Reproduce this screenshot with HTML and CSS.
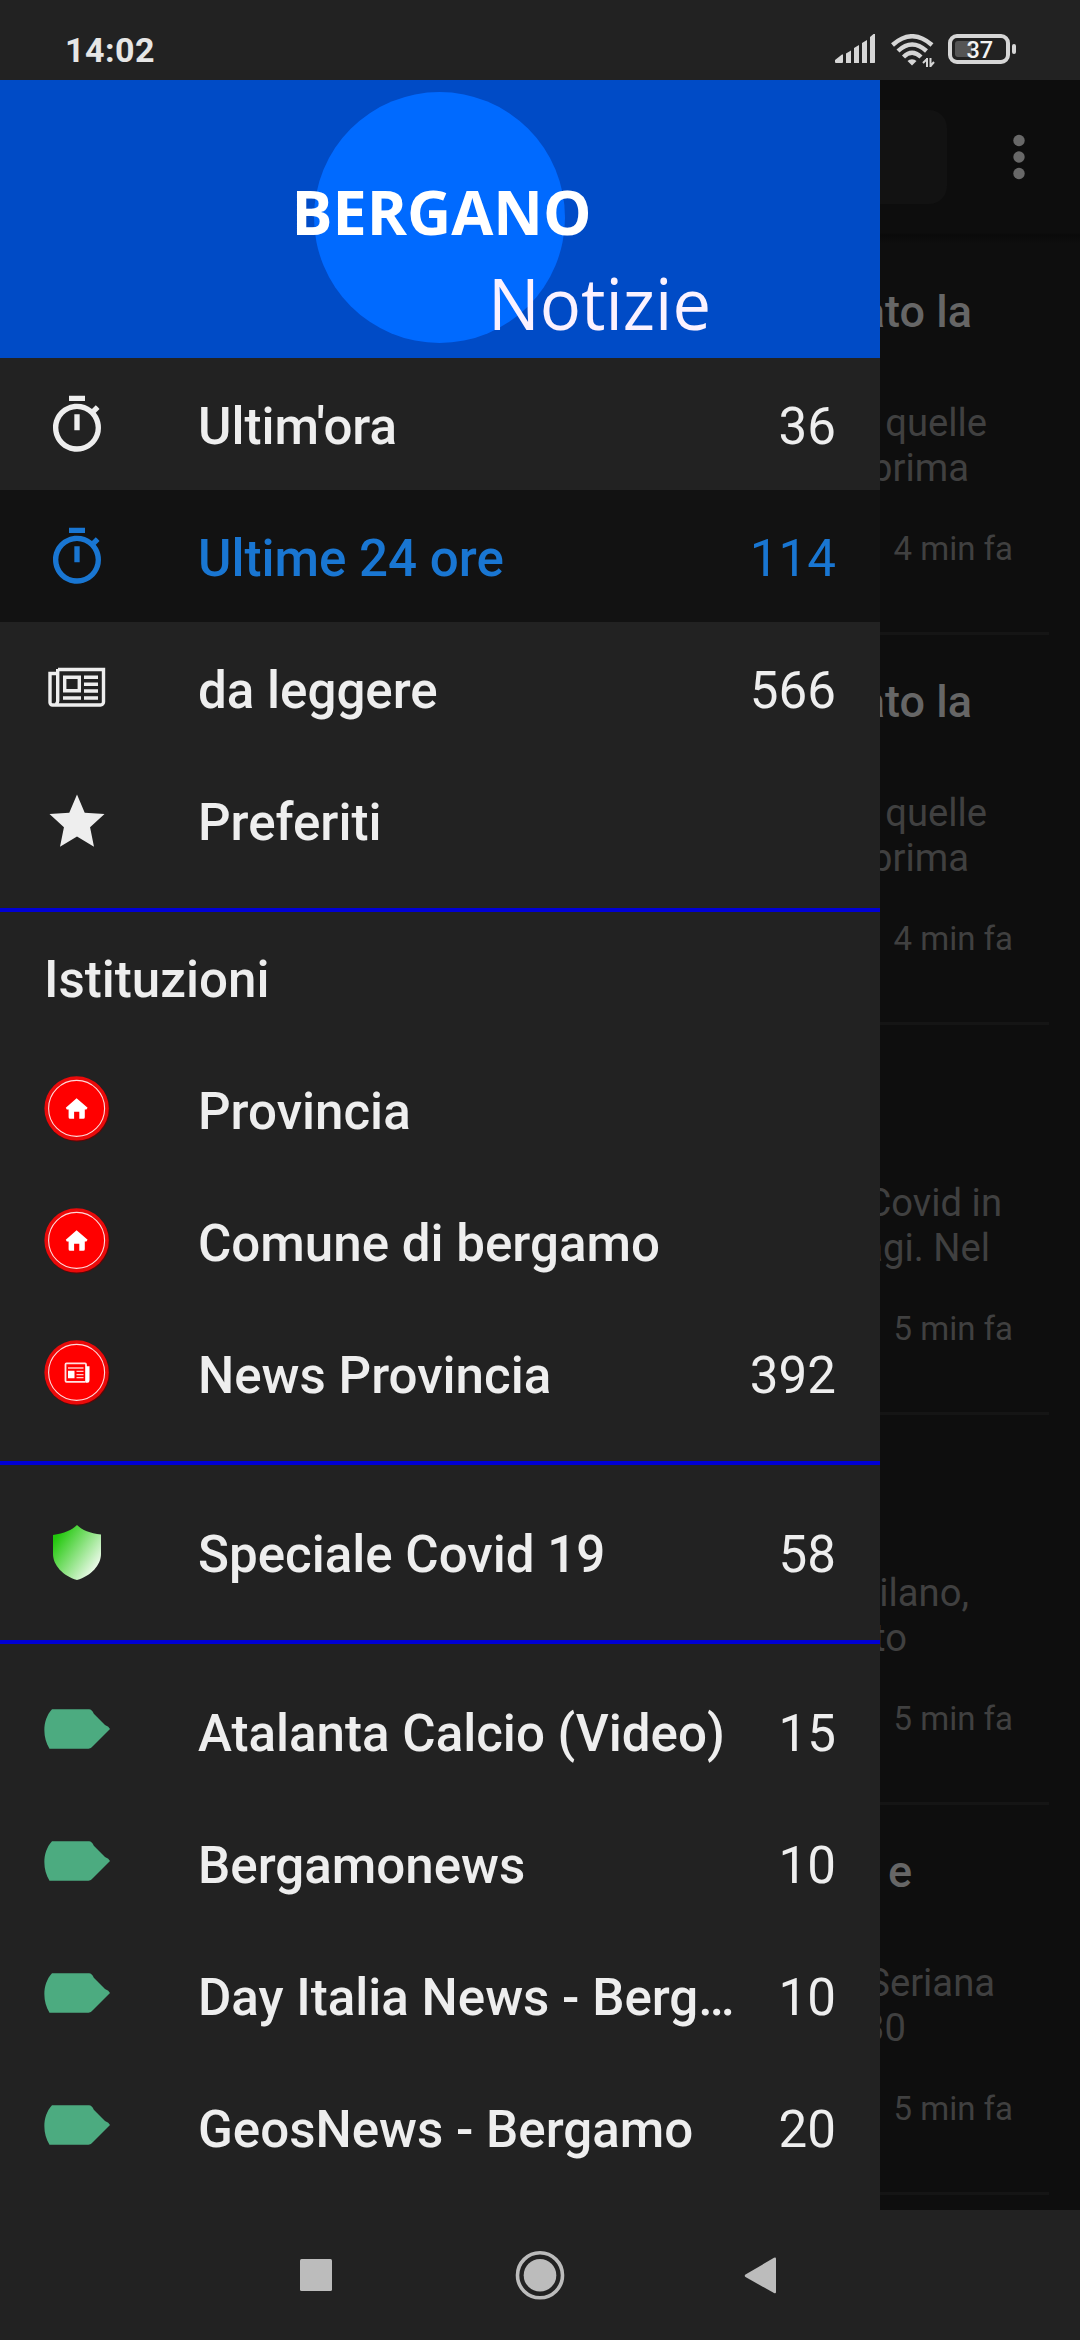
FILE: index.html
```html
<!DOCTYPE html>
<html lang="it">
<head>
<meta charset="utf-8">
<title>Bergamo Notizie</title>
<link rel="stylesheet" href="styles.css">
</head>
<body>
<svg width="0" height="0" class="defs">
  <defs>
    <linearGradient id="shieldFill" x1="0" y1="0.1" x2="1" y2="0.9">
      <stop offset="0.1" stop-color="#22c80c"/><stop offset="0.9" stop-color="#f0fbee"/>
    </linearGradient>
    <symbol id="timer" viewBox="0 0 24 24"><path d="M15 1H9v2h6V1zm-4 13h2V8h-2v6zm8.03-6.61l1.42-1.42c-.43-.51-.9-.99-1.41-1.41l-1.42 1.42A8.962 8.962 0 0 0 12 4c-4.97 0-9 4.03-9 9s4.02 9 9 9a8.994 8.994 0 0 0 7.03-14.61zM12 20c-3.87 0-7-3.13-7-7s3.13-7 7-7 7 3.13 7 7-3.13 7-7 7z"/></symbol>
    <symbol id="paper" viewBox="0 0 66 66">
      <g fill="none" stroke="currentColor" stroke-width="3.4">
        <path d="M14 14.500h45.500v32.500a3 3 0 0 1-3 3h-48a2.500 2.500 0 0 1-2.500-2.500V18.500h8"/>
        <path d="M13.700 14v32a4 4 0 0 1-2 3.500"/>
        <path d="M20.700 22.200h14.600v13.600h-14.600z"/>
        <path d="M40 22.200h14M40 29.200h14M40 36h14M40 43h14M19 43h18"/>
      </g>
    </symbol>
    <symbol id="star" viewBox="0 0 24 24"><path d="M12 17.270L18.180 21l-1.430-7.100L22 9.050l-7.190-.42L12 2 9.190 8.630 2 9.050l5.250 4.850L5.820 21z"/></symbol>
    <symbol id="disc" viewBox="0 0 66 66">
      <circle cx="33.300" cy="33.500" r="32.300" fill="#5a0808"/>
      <circle cx="32.600" cy="32.400" r="32.200" fill="#ea0a0a"/>
      <circle cx="32.600" cy="32.400" r="28" fill="#f00" stroke="#ffd9d9" stroke-width="1.100"/>
    </symbol>
    <symbol id="home" viewBox="0 0 66 66">
      <use href="#disc"/>
      <path fill="#fff" d="M32.600 22.200l11 9.500-1.200 1.800h-1.600v7.700q0 1.500-1.500 1.500h-4v-7h-5.200v7h-4q-1.500 0-1.500-1.500v-7.700h-1.800l-1-1.800z"/>
    </symbol>
    <symbol id="news" viewBox="0 0 66 66">
      <use href="#disc"/>
      <rect x="21.500" y="23.400" width="20.500" height="18.400" rx="1" fill="none" stroke="#ffe3e3" stroke-width="1.800"/>
      <path fill="#fff" d="M42 26.200h3.500v14q0 2.500-2 2.500h-1.500zM24 30.700h6.500v7.500H24z"/>
      <path stroke="#ffc9c9" stroke-width="1.300" d="M24 28h15.500M32.500 31.400h7M32.500 34.600h7M32.500 37.700h7"/>
    </symbol>
    <symbol id="shield" viewBox="0 0 66 66"><path fill="url(#shieldFill)" d="M33 6C38 11 46 14.500 57 15.500V35C57 46 47 57 33 61C19 57 9 46 9 35V16C20 14.500 28 11 33 6z"/></symbol>
    <symbol id="tag" viewBox="0 0 66 66"><path fill="#4cab80" d="M8 11.300H45Q48 11.500 49.800 15.800L61 27Q65 28.500 66 31L49 48Q47 50.700 44.500 50.700H5.500C-1.500 40-2 22 8 11.300z"/></symbol>
  </defs>
</svg>

<div class="screen">
  <header class="status">
    <span class="clock">14:02</span>
    <div class="indicators">
      <svg width="42" height="32" viewBox="0 0 42 32" fill="#d6d6d6"><path d="M0 30v-2l7-5.500h1V30q0 1-1 1H1q-1 0-1-1zM11 31V21.500l5-3V31zM19 31V16l5-3V31zM27 31V11l5-3V31zM35 31V5l3.500-3H40v28.500l-.5.500z"/></svg>
      <svg width="44" height="36" viewBox="0 0 44 36" fill="none" stroke="#d6d6d6" stroke-width="4.400"><path d="M1.500 11Q21 -6.500 41 11M7 17Q21 4 35.500 17M12.500 23Q21 14.500 30 23"/><path d="M16.500 27a5.500 4.300 0 0 1 9 0L21 31.500z" fill="#d6d6d6" stroke="none"/><path d="M36 24v9M39.500 24v9M36 25l-4 4M39.500 32l3.500-4" stroke-width="2"/></svg>
      <div class="battery"><span class="battery-case"><span class="battery-level">37</span></span><span class="battery-nub"></span></div>
    </div>
  </header>

  <div class="stage">
    <nav class="drawer">
      <div class="banner">
        <svg width="880" height="278" viewBox="0 80 880 278">
          <circle cx="439.500" cy="217.500" r="125.500" fill="#006aff"/>
          <text class="brand" x="291.500" y="235" textLength="300" lengthAdjust="spacingAndGlyphs">BERGANO</text>
          <text class="brand-sub" x="488" y="330" textLength="223" lengthAdjust="spacingAndGlyphs">Notizie</text>
        </svg>
      </div>
      <a class="row"><svg class="icon small"><use href="#timer"/></svg><span class="label">Ultim'ora</span><span class="count">36</span></a>
      <a class="row active"><svg class="icon small"><use href="#timer"/></svg><span class="label">Ultime 24 ore</span><span class="count">114</span></a>
      <a class="row"><svg class="icon"><use href="#paper"/></svg><span class="label">da leggere</span><span class="count">566</span></a>
      <a class="row"><svg class="icon star"><use href="#star"/></svg><span class="label">Preferiti</span></a>
      <hr class="rule tight">
      <h2 class="row section">Istituzioni</h2>
      <a class="row"><svg class="icon"><use href="#home"/></svg><span class="label">Provincia</span></a>
      <a class="row"><svg class="icon"><use href="#home"/></svg><span class="label">Comune di bergamo</span></a>
      <a class="row"><svg class="icon"><use href="#news"/></svg><span class="label">News Provincia</span><span class="count">392</span></a>
      <hr class="rule">
      <a class="row"><svg class="icon"><use href="#shield"/></svg><span class="label">Speciale Covid 19</span><span class="count">58</span></a>
      <hr class="rule">
      <a class="row"><svg class="icon"><use href="#tag"/></svg><span class="label">Atalanta Calcio (Video)</span><span class="count">15</span></a>
      <a class="row"><svg class="icon"><use href="#tag"/></svg><span class="label">Bergamonews</span><span class="count">10</span></a>
      <a class="row"><svg class="icon"><use href="#tag"/></svg><span class="label">Day Italia News - Berg…</span><span class="count">10</span></a>
      <a class="row"><svg class="icon"><use href="#tag"/></svg><span class="label">GeosNews - Bergamo</span><span class="count">20</span></a>
    </nav>

    <main class="feed">
      <div class="toolbar">
        <div class="search"></div>
        <svg class="more" width="12" height="46" viewBox="0 0 12 46" fill="#686868"><circle cx="6" cy="6.500" r="5.700"/><circle cx="6" cy="23" r="5.700"/><circle cx="6" cy="39.500" r="5.700"/></svg>
      </div>
      <article class="story one"><h3>ato la</h3><p>quelle</p><p class="second">prima</p><time>4 min fa</time></article>
      <article class="story one"><h3>ato la</h3><p>quelle</p><p class="second">prima</p><time>4 min fa</time></article>
      <article class="story two"><h3></h3><p>Covid in</p><p class="second">agi. Nel</p><time>5 min fa</time></article>
      <article class="story three"><h3></h3><p>ilano,</p><p class="second">to</p><time>5 min fa</time></article>
      <article class="story four"><h3>e</h3><p>Seriana</p><p class="second">30</p><time>5 min fa</time></article>
    </main>
  </div>

  <footer class="keys">
    <svg width="1080" height="130" viewBox="0 2210 1080 130" fill="#bcbcbc">
      <rect x="300" y="2259" width="32" height="32" rx="1.500"/>
      <circle cx="540" cy="2275.300" r="16.300"/><circle cx="540" cy="2275.300" r="22.500" fill="none" stroke="#bcbcbc" stroke-width="3.600"/>
      <path d="M745.500 2274.500L774 2257.800Q776 2257 776 2259V2292Q776 2294 774 2293L745.500 2277Q744 2275.700 745.500 2274.500z"/>
    </svg>
  </footer>
</div>
</body>
</html>
```
FILE: styles.css
```css
* { box-sizing: border-box; }
body { margin: 0; background: #222; font-family: Roboto, sans-serif; }
.defs { position: absolute; }
.screen { width: 1080px; height: 2340px; display: flex; flex-direction: column; background: #222; overflow: hidden; }

.status { height: 80px; flex: none; display: flex; justify-content: space-between; padding: 0 64px 0 65px; color: #e6e6e6; }
.clock { font-size: 34px; font-weight: 700; line-height: 40px; padding-top: 30px; letter-spacing: 0.5px; }
.indicators { display: flex; align-items: flex-start; padding-top: 32px; }
.indicators > svg:nth-child(2) { margin: 2px 13px 0 14px; }
.battery { display: flex; align-items: center; gap: 2px; padding-top: 2px; }
.battery-case { width: 62px; height: 30px; border: 4px solid #d6d6d6; border-radius: 9px; padding: 3px; }
.battery-level { display: block; width: 48px; height: 16px; border-radius: 3px; background: linear-gradient(90deg, #555 17px, transparent 17px); color: #f2f2f2; font-size: 23.5px; font-weight: 500; line-height: 18px; padding-left: 11.5px; }
.battery-nub { width: 4px; height: 10px; border-radius: 2px; background: #d6d6d6; }

.stage { height: 2130px; flex: none; display: flex; }
.drawer { width: 880px; flex: none; background: #222; color: #eee; overflow: hidden; }
.banner { height: 278px; background: #004bc6; }
.banner svg { display: block; }
.brand, .brand-sub { fill: #fff; font-family: "Open Sans", sans-serif; }
.brand { font-size: 60px; font-weight: 700; }
.brand-sub { font-size: 71px; font-weight: 400; fill: #fbf2ff; }

.row { height: 132px; display: flex; align-items: center; padding: 0 44px; margin: 0; }
.row.active { background: #121212; color: #1976d2; }
.icon { width: 66px; height: 66px; margin-right: 88px; flex: none; fill: currentColor; }
.icon.small { width: 64px; height: 64px; margin: 2px 89px 0 1px; }
.icon.star { margin-top: 3px; }
.label, .section, .count { font-size: 51.1px; line-height: 60px; padding-top: 6px; white-space: nowrap; }
.label, .section { font-weight: 500; }
.count { margin-left: auto; }
.rule { border: 0; height: 4px; margin: 22px 0 21px; background: #0000d4; }
.rule.tight { margin-bottom: -1px; }

.feed { flex: 1; background: #0e0e0e; overflow: hidden; }
.toolbar { height: 165px; display: flex; align-items: flex-start; padding-top: 30px; background: linear-gradient(#0d0d0d 153px, #0a0a0a 155px, #0e0e0e 164px); }
.search { width: 67px; height: 94px; border-radius: 0 18px 18px 0; background: #121212; }
.more { margin: 24px 0 0 66px; }
.story { height: 390px; display: flex; flex-direction: column; align-items: flex-end; color: #404040; border-bottom: 3px solid transparent; border-image: linear-gradient(90deg, #151515 167px, transparent 167px) 3; padding-top: 37px; white-space: nowrap; }
.story h3 { margin: 0 108px 59px 0; height: 60px; font-size: 45px; line-height: 60px; font-weight: 500; color: #666; }
.story p { margin: 0 93px 0 0; font-size: 38.2px; line-height: 45px; }
.story time { margin: 38px 67px 0 0; font-size: 33px; line-height: 40px; }
.story.one .second { margin-right: 111px; }
.story.two p { margin-right: 78px; }
.story.two .second { margin-right: 90px; }
.story.three p { margin-right: 111px; }
.story.three .second { margin-right: 173px; }
.story.four h3 { margin-right: 168px; }
.story.four p { margin-right: 85px; }
.story.four .second { margin-right: 174px; }

.keys { height: 130px; flex: none; }
.keys svg { display: block; }
```
